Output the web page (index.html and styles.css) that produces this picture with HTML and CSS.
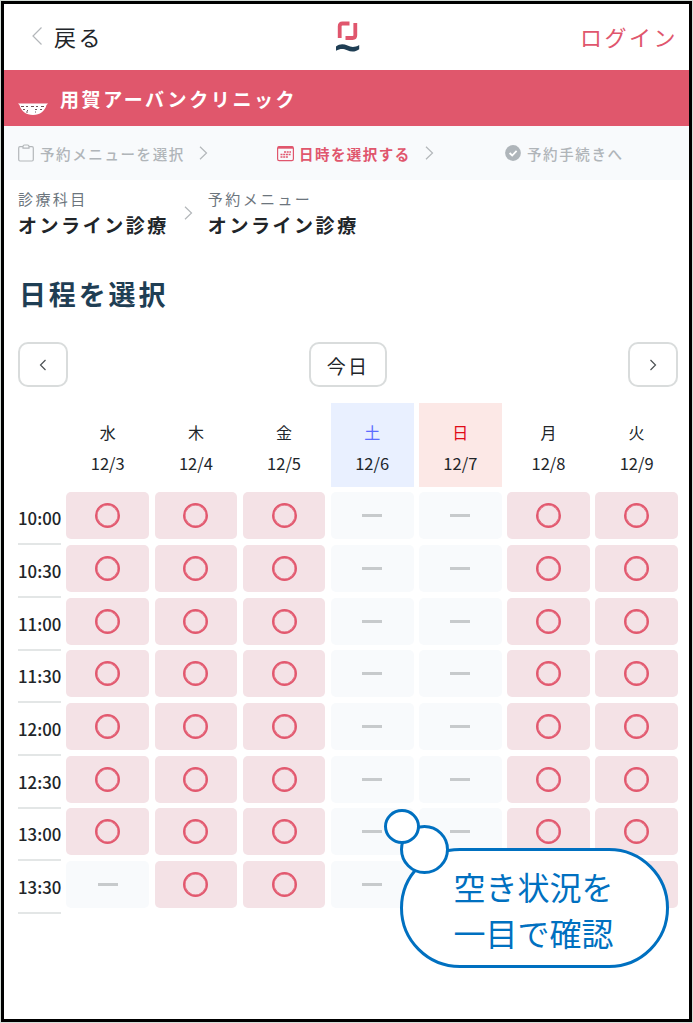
FILE: index.html
```html
<!DOCTYPE html>
<html lang="ja">
<head>
<meta charset="utf-8">
<title>日程を選択</title>
<link rel="stylesheet" href="styles.css">
</head>
<body>
<div class="frame">
  <header class="topbar">
    <a class="back"><svg width="12" height="20" viewBox="0 0 12 20"><path d="M10.500 1.500 2 10l8.500 8.500"/></svg><span>戻る</span></a>
    <svg class="logo" width="26" height="32" viewBox="0 0 26 32">
      <path class="logo-mark" d="M4.700 18V6.200Q4.700 3.500 7.400 3.500H14.500M20.300 3V15.300Q20.300 18 17.600 18H10.500"/>
      <path class="logo-wave" d="M1 26.500C4.500 23.700 8.500 23.500 12.500 25.600c4 2 7.500 1.900 11.700-.6v4.200c-4 3-8 3-12 1.100-4-2-7-1.900-11.200.4z"/>
    </svg>
    <a class="login">ログイン</a>
  </header>
  <div class="clinic">
    <svg width="30" height="13" viewBox="0 0 30 13">
      <path class="bowl" d="M0 .5h30l-1.500 1.500C27 8 22 12 15 12S3 8 1.500 2z"/>
      <path class="pattern" d="M3 3.500h3m2 0h2m3 0h3m2 0h2m3 0h3M5 6.500h2m2 1h1m7-1h2m3 0h2M8 9h2m7 0h1"/>
    </svg>
    <span>用賀アーバンクリニック</span>
  </div>
  <nav class="steps">
    <div class="step step-menu">
      <svg width="16" height="18" viewBox="0 0 16 18"><path d="M5 2.700H2Q.7 2.700.7 4v11.500Q.7 17 2 17h12q1.300 0 1.300-1.500V4q0-1.300-1.300-1.300h-3M5 4.200V2.500Q5 1 6.500 1h3Q11 1 11 2.500v1.700z"/></svg>
      <span>予約メニューを選択</span>
      <svg class="next" width="9" height="14" viewBox="0 0 9 14"><path d="m1 .8 6.500 6.200L1 13.200"/></svg>
    </div>
    <div class="step step-date">
      <svg width="17" height="17" viewBox="0 0 17 17"><rect x=".6" y="1.600" width="15.800" height="14" rx="1.600"/><path d="M1 2.600h15" stroke-width="2.200"/><path d="M7 7h7M3.500 9.500h10.500M3.500 12h7.500" stroke-width="1.500" stroke-dasharray="2 .7"/></svg>
      <span>日時を選択する</span>
      <svg class="next" width="9" height="14" viewBox="0 0 9 14"><path d="m1 .8 6.500 6.200L1 13.200"/></svg>
    </div>
    <div class="step step-finish">
      <svg width="16" height="16" viewBox="0 0 16 16"><circle cx="8" cy="8" r="7.900"/><path class="check" d="m4.600 8 2.600 2.500 4.400-4.600"/></svg>
      <span>予約手続きへ</span>
    </div>
  </nav>
  <div class="selection">
    <div class="choice"><span class="kind">診療科目</span><strong>オンライン診療</strong></div>
    <svg class="next" width="9" height="14" viewBox="0 0 9 14"><path d="m1 .8 6.500 6.200L1 13.200"/></svg>
    <div class="choice"><span class="kind">予約メニュー</span><strong>オンライン診療</strong></div>
  </div>
  <h1>日程を選択</h1>
  <div class="pager">
    <button class="arrow" aria-label="前へ"><svg width="8" height="12" viewBox="0 0 8 12"><path d="M6.500 1 1.500 6l5 5"/></svg></button>
    <button class="today">今日</button>
    <button class="arrow" aria-label="次へ"><svg width="8" height="12" viewBox="0 0 8 12"><path d="m1.500 1 5 5-5 5"/></svg></button>
  </div>
  <div class="calendar" id="calendar">
    <div></div>
    <div class="day"><span>水</span><span class="date">12/3</span></div>
    <div class="day"><span>木</span><span class="date">12/4</span></div>
    <div class="day"><span>金</span><span class="date">12/5</span></div>
    <div class="day sat"><span>土</span><span class="date">12/6</span></div>
    <div class="day sun"><span>日</span><span class="date">12/7</span></div>
    <div class="day"><span>月</span><span class="date">12/8</span></div>
    <div class="day"><span>火</span><span class="date">12/9</span></div>
  </div>
  <div class="bubble"><p>空き状況を<br>一目で確認</p></div>
  <div class="puff puff-large"></div>
  <div class="puff puff-small"></div>
</div>
<script src="calendar.js"></script>
</body>
</html>
```
FILE: calendar.js
```js
const calendar = document.getElementById('calendar');
const times = ['10:00', '10:30', '11:00', '11:30', '12:00', '12:30', '13:00', '13:30'];

times.forEach((time) => {
  const label = document.createElement('div');
  label.className = 'time';
  label.textContent = time;
  calendar.append(label);
  for (let day = 0; day < 7; day++) {
    const closed = day === 3 || day === 4 || (time === '13:30' && day === 0);
    const slot = document.createElement('div');
    slot.className = closed ? 'slot closed' : 'slot open';
    slot.append(document.createElement('i'));
    calendar.append(slot);
  }
});
```
FILE: styles.css
```css
* { box-sizing: border-box; }
body {
  margin: 0;
  background: #d5ddd8;
  color: #212529;
  font-family: "Noto Sans CJK JP", "Noto Sans", sans-serif;
}
.frame {
  position: relative;
  width: 691px;
  height: 1021px;
  margin: 1px;
  border: 3px solid #000;
  background: #fff;
}
svg { display: block; flex: none; fill: none; stroke: #b3b7ba; stroke-width: 1.2; }
.topbar {
  display: grid;
  grid-template-columns: 1fr auto 1fr;
  height: 66px;
  padding: 0 11px 0 27px;
  align-items: center;
  font-size: 22px;
  letter-spacing: 2.5px;
}
.back { display: flex; align-items: center; gap: 11px; }
.back span, .login { margin-top: -2px; }
.back svg { margin-top: -3px; }
.logo { margin: 0 13px 2px 0; }
.logo-mark { stroke: #e0566d; stroke-width: 3.800; }
.logo-wave { fill: #1f3e54; stroke: none; }
.login { justify-self: end; color: #e0566d; }
.clinic {
  display: flex;
  height: 56px;
  padding: 0 14px;
  gap: 12px;
  align-items: center;
  background: #e0576c;
  color: #fff;
  font-size: 19px;
  font-weight: 700;
  letter-spacing: 2.600px;
}
.clinic svg { margin-top: 22px; }
.bowl { fill: #fff; stroke: none; }
.pattern { stroke: #6f5358; stroke-width: 1; }
.steps {
  display: grid;
  grid-template-columns: 259px 228px 1fr;
  height: 54px;
  padding-left: 14px;
  align-items: center;
  background: #f8fafc;
  color: #b0b5b9;
  font-size: 14.500px;
  font-weight: 500;
  letter-spacing: 1.600px;
}
.step { display: flex; align-items: center; }
.step span { margin-left: 6px; }
.step .next { margin-left: 14px; }
.step-date { color: #e0566d; font-weight: 700; letter-spacing: 1.450px; }
.step-date span { margin-left: 5px; }
.step-date svg:first-child { stroke: #e0566d; }
.step-finish circle { fill: #afb5ba; stroke: none; }
.check { stroke: #fff; stroke-width: 1.800; }
.selection { display: flex; height: 62px; padding: 7px 14px 0; }
.choice { display: flex; flex-direction: column; }
.kind { font-size: 15px; line-height: 24px; letter-spacing: 2.400px; color: #6c757d; }
.choice strong { font-size: 19px; line-height: 27px; letter-spacing: 2.550px; }
.selection .next { margin: 19px 15px 0; }
h1 {
  margin: 32px 0 0 15px;
  color: #1f3e54;
  font-size: 27px;
  font-weight: 700;
  line-height: 40px;
  letter-spacing: 2.850px;
}
.pager { display: flex; justify-content: space-between; padding: 28px 11px 0 14px; }
.pager button {
  display: flex;
  width: 50px;
  height: 45px;
  padding: 0;
  align-items: center;
  justify-content: center;
  border: 2px solid #d9dcdc;
  border-radius: 10px;
  background: #fff;
  color: #212529;
  font: 400 19px "Noto Sans CJK JP", sans-serif;
  letter-spacing: 2.200px;
}
.pager .today { width: 78px; padding: 1px 0 0; }
.arrow svg { stroke: #4c5154; }
.calendar {
  display: grid;
  grid-template-columns: 43px repeat(7, 1fr);
  grid-template-rows: 83.500px repeat(8, 47px);
  gap: 5.700px 5.400px;
  padding: 16px 11px 0 14px;
}
.day {
  display: flex;
  flex-direction: column;
  align-items: center;
  padding-top: 14px;
  font-size: 16px;
  line-height: 31px;
}
.date { font-size: 16.500px; }
.sat { background: #e9f0ff; }
.sat span:first-child { color: #5c6cff; }
.sun { background: #fce8e6; }
.sun span:first-child { color: #e00b16; }
.time {
  height: 53px;
  border-bottom: 2px solid #e3e6e6;
  font-size: 16.800px;
  font-weight: 500;
  line-height: 53px;
  white-space: nowrap;
}
.slot { display: flex; align-items: center; justify-content: center; border-radius: 5px; }
.open { background: #f4e2e6; }
.open i {
  width: 25px;
  height: 25px;
  border: 2px solid #e2586e;
  border-radius: 50%;
  box-shadow: inset 0 0 0 .5px #e2586e;
}
.closed { background: #f8fafc; }
.closed i { width: 20px; height: 3px; background: #c7cacc; }
.bubble {
  position: absolute;
  left: 396px;
  top: 844px;
  display: flex;
  width: 269px;
  height: 120px;
  align-items: center;
  justify-content: center;
  border: 3px solid #0070c0;
  border-radius: 60px;
  background: #fff;
}
.bubble p { margin: 2px 2px 0 0; color: #0070c0; font-size: 32px; line-height: 46px; }
.puff { position: absolute; border: 3px solid #0070c0; border-radius: 50%; background: #fff; }
.puff-large { left: 396px; top: 821px; width: 49px; height: 49px; }
.puff-small { left: 380px; top: 805px; width: 36px; height: 35px; }
```
